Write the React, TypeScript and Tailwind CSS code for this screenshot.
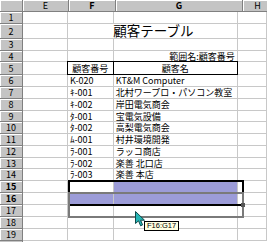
const COLS = [
  { key: "E", w: "w-[46px]" },
  { key: "F", w: "w-[47px]" },
  { key: "G", w: "w-[127px]" },
  { key: "H", w: "w-[30px]" },
];

// row heights in px, rows 1..19
const rowH = [
  "h-[12px]", "h-[15px]", "h-[12px]", "h-[11px]", "h-[13px]",
  "h-[12px]", "h-[12px]", "h-[12px]", "h-[11px]", "h-[12px]",
  "h-[12px]", "h-[12px]", "h-[11px]", "h-[12px]", "h-[12px]",
  "h-[12px]", "h-[12px]", "h-[12px]", "h-[12px]",
];

const data: Record<number, [string, string]> = {
  6: ["K-020", "KT&M Computer"],
  7: ["ｷ-001", "北村ワープロ・パソコン教室"],
  8: ["ｷ-002", "岸田電気商会"],
  9: ["ﾀ-001", "宝電気設備"],
  10: ["ﾀ-002", "高梨電気商会"],
  11: ["ﾑ-001", "村井環境開発"],
  12: ["ﾗ-001", "ラッコ商店"],
  13: ["ﾗ-002", "楽善 北口店"],
  14: ["ﾗ-003", "楽善 本店"],
};

const head =
  "flex items-center justify-center bg-[#c4c4c4] border-r border-b border-[#808080] shadow-[inset_1px_1px_0_#ffffff] text-[9px] text-black";
const cell = "flex items-center border-r border-b border-[#c8c8c8] overflow-visible whitespace-nowrap";

function Row({ n }: { n: number }) {
  const h = rowH[n - 1];
  const sel = n === 15 || n === 16;
  const lav = "bg-[#9c9cd8]";
  const row = data[n];

  if (n === 2) {
    return (
      <div className={`flex ${h}`}>
        <div className={`${head} w-[23px] shrink-0`}>{n}</div>
        <div className={`${cell} w-[46px]`} />
        <div className={`${cell} w-[174px] justify-center pl-[2px] text-[13.5px] leading-none`}>顧客テーブル</div>
        <div className={`${cell} w-[30px]`} />
      </div>
    );
  }

  let f: React.ReactNode = null;
  let g: React.ReactNode = null;
  let fCls = "";
  let gCls = "";
  if (n === 4) {
    g = "範囲名:顧客番号";
    gCls = "justify-end pr-[2px]";
  } else if (n === 5) {
    f = "顧客番号";
    g = "顧客名";
    fCls = "justify-center border-t border-l border-black !border-r-black !border-b-black -mt-px -ml-px w-[48px]";
    gCls = "justify-center border-t border-black !border-r-black !border-b-black -mt-px";
  } else if (row) {
    f = row[0];
    g = row[1];
    fCls = "pl-[2px]";
    gCls = "pl-[2px]";
  }
  if (n === 16) fCls += ` ${lav}`;
  if (n === 15 || n === 16) gCls += ` ${lav}`;

  return (
    <div className={`flex ${h}`}>
      <div className={`${head} w-[23px] shrink-0 ${sel ? "font-bold" : ""}`}>{n}</div>
      <div className={`${cell} w-[46px]`} />
      <div className={`${cell} ${n === 5 ? "" : "w-[47px]"} ${fCls}`}>{f}</div>
      <div className={`${cell} w-[127px] ${gCls}`}>{g}</div>
      <div className={`${cell} w-[30px]`} />
    </div>
  );
}

export default function App() {
  return (
    <div
      className="relative w-[267px] h-[242px] overflow-hidden bg-white text-[9px] leading-none text-black"
      style={{ fontFamily: '"Noto Sans CJK JP", "Liberation Sans", sans-serif' }}
    >
      <div className="flex h-[12px]">
        <div className={`${head} w-[23px] shrink-0`} />
        {COLS.map((c) => (
          <div key={c.key} className={`${head} ${c.w} shrink-0 ${c.key === "F" || c.key === "G" ? "font-bold" : ""}`}>
            {c.key}
          </div>
        ))}
      </div>
      {rowH.map((_, i) => (
        <Row key={i} n={i + 1} />
      ))}
      <div className="flex h-[2px]">
        <div className="w-[23px] bg-[#c4c4c4] border-r border-[#808080]" />
      </div>

      {/* current selection F15:G16 */}
      <div className="absolute left-[68px] top-[180px] w-[176px] h-[26px] border-2 border-black" />
      {/* drag outline F16:G17 */}
      <div className="absolute left-[68px] top-[192px] w-[176px] h-[26px] border-2 border-[#7a7a7a]" />
      {/* fill handle */}
      <div className="absolute left-[241px] top-[203px] w-[4px] h-[4px] bg-[#555]" />

      {/* cursor */}
      <svg className="absolute left-[135px] top-[211px]" width="11" height="16" viewBox="0 0 11 16">
        <path
          d="M0.5 0.5 L0.5 12.5 L3.5 9.8 L5.6 14.8 L7.6 13.9 L5.6 9.2 L9.5 9.2 Z"
          fill="#25b5b5"
          stroke="#0d4a4a"
          strokeWidth="1"
          strokeLinejoin="round"
        />
      </svg>

      {/* tooltip */}
      <div
        className="absolute left-[144px] top-[221px] h-[10px] px-[2px] flex items-center border border-black bg-[#ffffe1] text-[7.5px] leading-none"
        style={{ fontFamily: '"Liberation Sans", sans-serif' }}
      >
        F16:G17
      </div>
    </div>
  );
}
